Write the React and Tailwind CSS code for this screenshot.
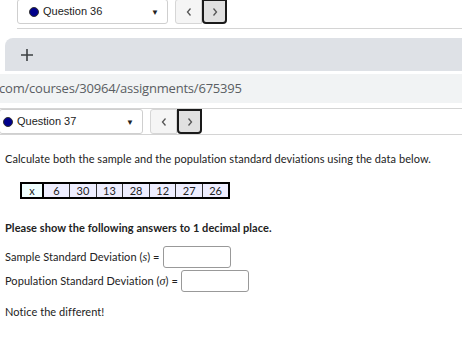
export default function App() {
  const data = [6, 30, 13, 28, 12, 27, 26];

  const Chevron = ({ dir }) => (
    <svg width="8" height="10" viewBox="0 0 8 10">
      <path
        d={dir === "left" ? "M5.5 1.5L2.5 5l3 3.5" : "M2.5 1.5L5.5 5l-3 3.5"}
        fill="none"
        stroke="#555"
        strokeWidth="1.3"
      />
    </svg>
  );

  const QuestionBar = ({ label, dotLeft, width, className }) => (
    <div className={`flex items-stretch ${className}`}>
      <div
        className="flex items-center border border-[#cfcfcf] rounded-[3px] bg-white"
        style={{ width }}
      >
        <span className="w-[10px] h-[10px] rounded-full bg-[#00008b] border border-[#333] shrink-0" style={{ marginLeft: dotLeft }} />
        <span className="ml-[4px] text-[11px] text-[#222] font-['Liberation_Sans',sans-serif]">{label}</span>
        <span className="ml-auto mr-[8px] text-[8px] text-[#222]">▼</span>
      </div>
      <div className="ml-[7px] w-[27px] flex items-center justify-center bg-[#f5f5f5] border border-[#d6d6d6] rounded-l-[3px]">
        <Chevron dir="left" />
      </div>
      <div className="w-[25px] flex items-center justify-center bg-[#e0e0e0] border-2 border-[#1a1a1a] rounded-b-[4px]">
        <Chevron dir="right" />
      </div>
    </div>
  );

  return (
    <div className="w-[462px] h-[349px] bg-white overflow-hidden font-['Lato',sans-serif] text-[#222]">
      {/* previous question row, cut at top */}
      <div className="h-[29px] ml-[17px] border-b border-[#d4d4d4] overflow-hidden">
        <QuestionBar label="Question 36" dotLeft="11px" width="151px" className="h-[25px] mt-[-1px]" />
      </div>

      {/* browser tab strip */}
      <div className="mt-[9px] ml-[5px] h-[33px] bg-[#dee1e6] rounded-tl-[8px] flex items-center">
        <svg width="14" height="14" viewBox="0 0 14 14" className="ml-[15px]">
          <path d="M7 1v12M1 7h12" stroke="#3c4043" strokeWidth="1.6" />
        </svg>
      </div>

      {/* address bar */}
      <div className="mt-[3px] h-[29px] bg-[#f1f3f4] flex items-center">
        <span className="text-[13px] text-[#5a5e63] font-['Open_Sans',sans-serif] tracking-[-0.2px] ml-[-1px]">
          com/courses/30964/assignments/675395
        </span>
      </div>

      {/* current question row */}
      <div className="mt-[5px] border-t border-b border-[#d4d4d4] h-[27px]">
        <QuestionBar label="Question 37" dotLeft="3px" width="144px" className="h-[25px] ml-[-1px]" />
      </div>

      <div className="px-[5px] text-[11px] tracking-[0.06px]">
        <p className="mt-[17px] leading-[14px]">
          Calculate both the sample and the population standard deviations using the data below.
        </p>

        <table className="mt-[16px] ml-[15px] border-collapse border-2 border-black text-[11px]">
          <tbody>
            <tr className="h-[15px]">
              <td className="w-[22px] text-center bg-[#f0ffff] border-r-2 border-black leading-[13px] px-0">x</td>
              {data.map((n, i) => (
                <td
                  key={i}
                  className="w-[26.6px] text-center bg-[#eeeeff] border border-[#333] leading-[13px] px-0"
                >
                  {n}
                </td>
              ))}
            </tr>
          </tbody>
        </table>

        <p className="mt-[22px] font-bold leading-[14px]">
          Please show the following answers to 1 decimal place.
        </p>

        <div className="mt-[11px] flex items-center h-[22px]">
          <span>
            Sample Standard Deviation (<i className="font-['Liberation_Serif',serif] text-[12px]">s</i>) =
          </span>
          <span className="ml-[3px] w-[68px] h-[22px] border border-[#999] rounded-[3px] bg-white" />
        </div>
        <div className="mt-[2px] flex items-center h-[22px]">
          <span>
            Population Standard Deviation (<i className="font-['Liberation_Serif',serif] text-[12px]">σ</i>) =
          </span>
          <span className="ml-[3px] w-[68px] h-[22px] border border-[#999] rounded-[3px] bg-white" />
        </div>

        <p className="mt-[13px] leading-[14px]">Notice the different!</p>
      </div>
    </div>
  );
}
